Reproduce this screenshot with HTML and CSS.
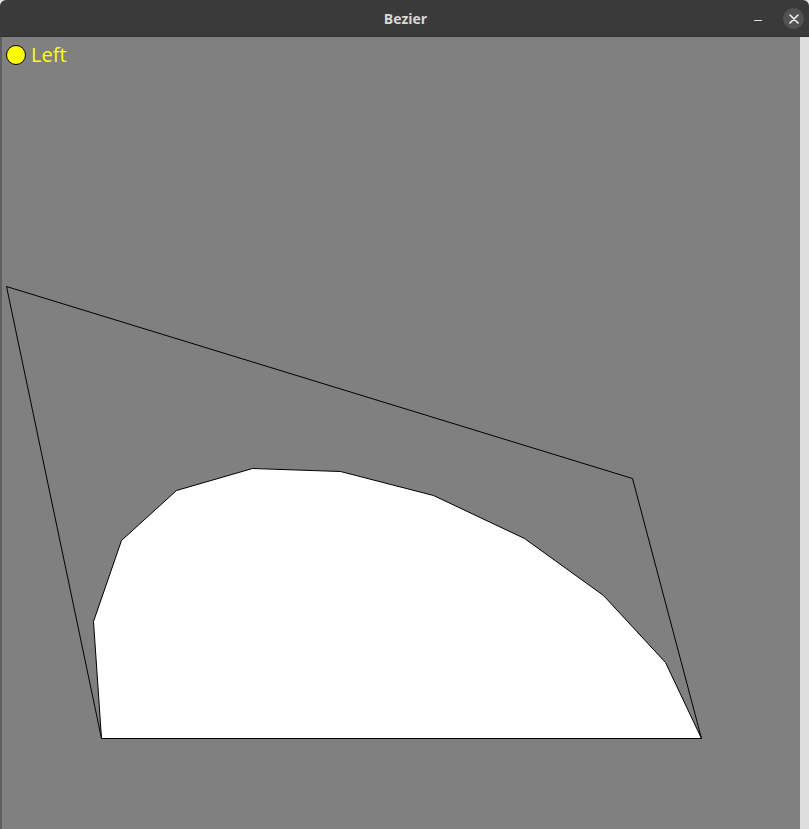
FILE: index.html
```html
<!DOCTYPE html>
<html>
<head>
<meta charset="utf-8">
<title>Bezier</title>
<link rel="stylesheet" href="styles.css">
</head>
<body>
<div class="window">
  <header class="titlebar">
    <span class="title">Bezier</span>
    <div class="controls">
      <span class="min"></span>
      <span class="close">
        <svg width="10" height="10" viewBox="0 0 10 10"><path d="M1 1L9 9M9 1L1 9" stroke="#f2f2f2" stroke-width="1.6" stroke-linecap="round"/></svg>
      </span>
    </div>
  </header>
  <div class="content">
    <div class="canvas">
      <svg class="drawing" width="800" height="792" viewBox="0 37 800 792">
        <polygon points="101.5,738.5 93.5,621.5 121.5,540.5 176.5,490.5 252.5,468.5 340.5,471.5 433.5,495.5 524.5,538.5 603.5,595.5 665.5,662.5 701.5,738.5" fill="#ffffff" stroke="#000000" stroke-width="1"/>
        <polyline points="101.5,738.5 6.5,286.5 632.5,478.5 701.5,738.5" fill="none" stroke="#000000" stroke-width="1"/>
      </svg>
      <div class="legend">
        <span class="dot"></span>
        <span class="label">Left</span>
      </div>
    </div>
    <div class="edge"></div>
  </div>
</div>
</body>
</html>
```

FILE: styles.css
```css
html, body {
  margin: 0;
  padding: 0;
  background: #e6e6e6;
}
.window {
  width: 809px;
  height: 829px;
  display: flex;
  flex-direction: column;
  overflow: hidden;
  border-radius: 6px 6px 0 0;
}
.titlebar {
  height: 37px;
  flex: 0 0 37px;
  background: #3a3a3a;
  display: flex;
  align-items: center;
  justify-content: center;
  position: relative;
  box-sizing: border-box;
  border-bottom: 1px solid #303030;
}
.title {
  font-family: "Open Sans", "DejaVu Sans", sans-serif;
  font-weight: bold;
  font-size: 14px;
  color: #d8d8d8;
  margin-left: 2px;
}
.controls {
  position: absolute;
  right: 5px;
  top: 8px;
  display: flex;
  align-items: center;
  gap: 21px;
}
.min {
  width: 8px;
  height: 1px;
  background: #e0e0e0;
  margin-top: 4px;
}
.close {
  width: 21px;
  height: 21px;
  border-radius: 50%;
  background: #525252;
  display: flex;
  align-items: center;
  justify-content: center;
}
.close svg {
  display: block;
}
.content {
  flex: 1;
  display: flex;
}
.canvas {
  position: relative;
  width: 800px;
  height: 792px;
  background: #808080;
  box-shadow: inset 2px 0 0 #5e5e5e;
}
.drawing {
  position: absolute;
  left: 0;
  top: 0;
  display: block;
}
.legend {
  position: relative;
  display: flex;
  align-items: center;
  gap: 5px;
  padding: 6px 0 0 6px;
}
.dot {
  width: 18px;
  height: 18px;
  border-radius: 50%;
  background: #ffff00;
  border: 1px solid #000000;
}
.label {
  font-family: "Open Sans", "DejaVu Sans", sans-serif;
  font-size: 20px;
  line-height: 24px;
  color: #ffff00;
}
.edge {
  flex: 1;
  background: #dedede;
}
```
